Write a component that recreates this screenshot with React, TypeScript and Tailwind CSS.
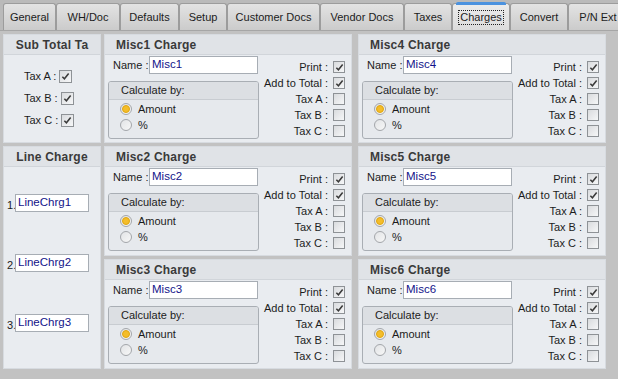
import React from "react";

const tabs: { label: string; w: string; active?: boolean }[] = [
  { label: "General", w: "w-[53px]" },
  { label: "WH/Doc", w: "w-[64px]" },
  { label: "Defaults", w: "w-[59px]" },
  { label: "Setup", w: "w-[48px]" },
  { label: "Customer Docs", w: "w-[93px]" },
  { label: "Vendor Docs", w: "w-[84px]" },
  { label: "Taxes", w: "w-[48px]" },
  { label: "Charges", w: "w-[58px]", active: true },
  { label: "Convert", w: "w-[58px]" },
  { label: "P/N Ext", w: "w-[60px]" },
];

const CheckBox: React.FC<{ checked?: boolean; size?: string }> = ({
  checked = false,
  size = "w-[12px] h-[12px]",
}) => (
  <div
    className={`${size} shrink-0 border border-[#8e9296] bg-gradient-to-br from-[#d9dbde] to-[#f6f7f8] flex items-center justify-center`}
  >
    {checked && (
      <svg viewBox="0 0 10 10" className="w-[9px] h-[9px]">
        <path
          d="M1.5 5.2 L3.8 7.6 L8.5 1.6"
          fill="none"
          stroke="#3b3b3b"
          strokeWidth={1.7}
        />
      </svg>
    )}
  </div>
);

const Radio: React.FC<{ selected?: boolean }> = ({ selected = false }) => (
  <div className="w-[12px] h-[12px] shrink-0 rounded-full border border-[#a3a6aa] bg-gradient-to-br from-[#e2e4e6] to-[#f7f7f7] flex items-center justify-center">
    {selected && (
      <div className="w-[8px] h-[8px] rounded-full bg-[#f4bd2a] border border-[#dfa510]" />
    )}
  </div>
);

const Header: React.FC<React.PropsWithChildren<{ center?: boolean }>> = ({
  center,
  children,
}) => (
  <div
    className={`h-[20px] shrink-0 flex items-center bg-[#e0e3e7] border-b border-[#d1d5da] text-[12px] font-bold text-[#3a3a3a] tracking-[0.2px] whitespace-nowrap overflow-hidden ${
      center ? "justify-center" : "pl-[11px]"
    }`}
  >
    {children}
  </div>
);

const TextBox: React.FC<{ value: string; w: string }> = ({ value, w }) => (
  <div
    className={`${w} h-[18px] bg-white border border-[#a7adb4] text-[#13138a] pl-[2px] leading-[14px] text-[11.5px]`}
  >
    {value}
  </div>
);

const MiscPanel: React.FC<{ n: number; className?: string }> = ({
  n,
  className = "",
}) => (
  <div
    className={`flex flex-col bg-[#e9ecf0] border border-[#d7dbe0] ${className}`}
  >
    <Header>Misc{n} Charge</Header>
    <div className="flex flex-1 justify-between pr-[6px]">
      <div className="flex flex-col pl-[3px]">
        <div className="flex items-center h-[18px] mt-[1px] pl-[5px]">
          <span className="w-[36px]">Name :</span>
          <TextBox value={`Misc${n}`} w="w-[109px]" />
        </div>
        <div className="mt-[7px] w-[151px] h-[58px] border border-[#a9aeb4] rounded-[3px] bg-[#e6e9ed] overflow-hidden">
          <div className="h-[18px] flex items-center pl-[12px] bg-[#dcdfe3] border-b border-[#c8ccd1]">
            Calculate by:
          </div>
          <div className="pt-[1px] pl-[11px]">
            <div className="h-[16px] flex items-center gap-[6px]">
              <Radio selected />
              <span>Amount</span>
            </div>
            <div className="h-[16px] flex items-center gap-[6px]">
              <Radio />
              <span>%</span>
            </div>
          </div>
        </div>
      </div>
      <div className="flex flex-col items-end pt-[4px]">
        {[
          ["Print :", true],
          ["Add to Total :", true],
          ["Tax A :", false],
          ["Tax B :", false],
          ["Tax C :", false],
        ].map(([label, checked]) => (
          <div
            key={label as string}
            className="h-[16px] flex items-center gap-[5px]"
          >
            <span>{label as string}</span>
            <CheckBox checked={checked as boolean} />
          </div>
        ))}
      </div>
    </div>
  </div>
);

export default function App() {
  return (
    <div className="w-[618px] h-[379px] overflow-hidden bg-[#c2c2c2] font-['Liberation_Sans',Arial,sans-serif] text-[11px] text-[#1c1c1c]">
      {/* tab strip */}
      <div className="flex items-end h-[31px] pl-[3px] bg-[#bababa] border-b border-[#a6a6a6]">
        {tabs.map((t) => (
          <div
            key={t.label}
            className={`${t.w} shrink-0 h-[27px] relative flex items-center justify-center border-x border-t border-[#9c9c9c] rounded-t-[3px] whitespace-nowrap ${
              t.active
                ? "bg-gradient-to-b from-[#ececec] to-[#dcdcdc]"
                : "bg-gradient-to-b from-[#e3e3e3] to-[#cbcbcb]"
            }`}
          >
            {t.active && (
              <div className="absolute top-[-2px] left-[3px] right-[3px] h-[3px] rounded-t-[2px] bg-[#4b92df]" />
            )}
            <span
              className={
                t.active
                  ? "px-[1px] leading-[13px] border border-dotted border-[#222]"
                  : ""
              }
            >
              {t.label}
            </span>
          </div>
        ))}
      </div>

      {/* content */}
      <div className="grid grid-cols-[98px_248px_251px] grid-rows-[109px_110px_110px] gap-x-[3px] gap-y-[3px] pl-[3px] pt-[3px]">
        <div className="flex flex-col bg-[#e9ecf0] border border-[#d7dbe0]">
          <Header center>Sub Total Ta</Header>
          <div className="flex flex-col pt-[10px] pl-[20px]">
            {["Tax A :", "Tax B :", "Tax C :"].map((l) => (
              <div key={l} className="h-[22px] flex items-center gap-[3px]">
                <span>{l}</span>
                <CheckBox checked size="w-[13px] h-[13px]" />
              </div>
            ))}
          </div>
        </div>
        <MiscPanel n={1} />
        <MiscPanel n={4} className="ml-[3px]" />

        <div className="row-span-2 flex flex-col bg-[#e9ecf0] border border-[#d7dbe0]">
          <Header center>Line Charge</Header>
          <div className="flex flex-col gap-[42px] pt-[27px] pl-[3px]">
            {[1, 2, 3].map((i) => (
              <div key={i} className="flex items-end">
                <span className="w-[8px] leading-[14px]">{i}.</span>
                <TextBox value={`LineChrg${i}`} w="w-[74px]" />
              </div>
            ))}
          </div>
        </div>
        <MiscPanel n={2} />
        <MiscPanel n={5} className="ml-[3px]" />
        <MiscPanel n={3} />
        <MiscPanel n={6} className="ml-[3px]" />
      </div>
    </div>
  );
}
